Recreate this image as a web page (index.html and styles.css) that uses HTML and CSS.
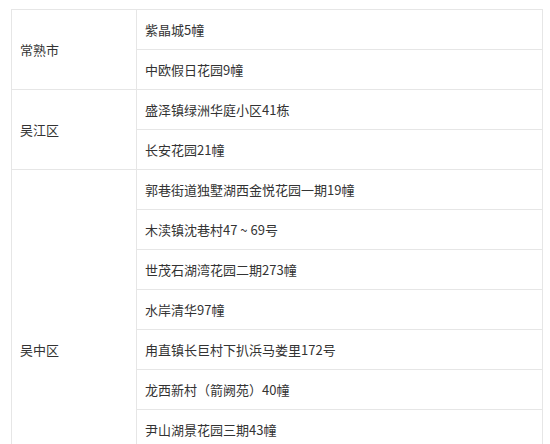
FILE: index.html
```html
<!DOCTYPE html>
<html lang="zh-CN">
<head>
<meta charset="utf-8">
<link rel="stylesheet" href="styles.css">
</head>
<body>
<table class="list">
  <tbody>
    <tr><td class="area" rowspan="2">常熟市</td><td>紫晶城5幢</td></tr>
    <tr><td>中欧假日花园9幢</td></tr>
    <tr><td class="area" rowspan="2">吴江区</td><td>盛泽镇绿洲华庭小区41栋</td></tr>
    <tr><td>长安花园21幢</td></tr>
    <tr><td class="area" rowspan="9">吴中区</td><td>郭巷街道独墅湖西金悦花园一期19幢</td></tr>
    <tr><td>木渎镇沈巷村47 ~ 69号</td></tr>
    <tr><td>世茂石湖湾花园二期273幢</td></tr>
    <tr><td>水岸清华97幢</td></tr>
    <tr><td>甪直镇长巨村下扒浜马娄里172号</td></tr>
    <tr><td>龙西新村（箭阙苑）40幢</td></tr>
    <tr><td>尹山湖景花园三期43幢</td></tr>
    <tr><td>东方之门北区3幢</td></tr>
    <tr><td>越溪街道吴中花园8幢</td></tr>
  </tbody>
</table>
</body>
</html>
```

FILE: styles.css
```css
html, body {
  margin: 0;
  padding: 0;
  background: #fff;
}
body {
  padding: 9px 0 0 11px;
  font-family: "Noto Sans CJK SC", "Microsoft YaHei", sans-serif;
  font-size: 13px;
  color: #333;
}
.list {
  border-collapse: collapse;
  width: 532px;
}
.list td {
  border: 1px solid #e6e6e6;
  height: 40px;
  padding: 0 8px;
  box-sizing: border-box;
  line-height: 20px;
  vertical-align: middle;
  text-align: left;
}
.list td.area {
  width: 125px;
}
```
